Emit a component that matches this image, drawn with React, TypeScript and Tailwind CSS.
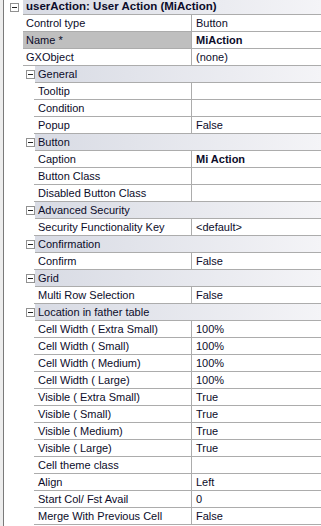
import React from 'react';

type Prop = { name: string; value?: string; bold?: boolean; selected?: boolean };
type Group = { title: string; props: Prop[] };

const topProps: Prop[] = [
  { name: 'Control type', value: 'Button' },
  { name: 'Name *', value: 'MiAction', bold: true, selected: true },
  { name: 'GXObject', value: '(none)' },
];

const groups: Group[] = [
  {
    title: 'General',
    props: [{ name: 'Tooltip' }, { name: 'Condition' }, { name: 'Popup', value: 'False' }],
  },
  {
    title: 'Button',
    props: [
      { name: 'Caption', value: 'Mi Action', bold: true },
      { name: 'Button Class' },
      { name: 'Disabled Button Class' },
    ],
  },
  {
    title: 'Advanced Security',
    props: [{ name: 'Security Functionality Key', value: '<default>' }],
  },
  { title: 'Confirmation', props: [{ name: 'Confirm', value: 'False' }] },
  { title: 'Grid', props: [{ name: 'Multi Row Selection', value: 'False' }] },
  {
    title: 'Location in father table',
    props: [
      { name: 'Cell Width ( Extra Small)', value: '100%' },
      { name: 'Cell Width ( Small)', value: '100%' },
      { name: 'Cell Width ( Medium)', value: '100%' },
      { name: 'Cell Width ( Large)', value: '100%' },
      { name: 'Visible ( Extra Small)', value: 'True' },
      { name: 'Visible ( Small)', value: 'True' },
      { name: 'Visible ( Medium)', value: 'True' },
      { name: 'Visible ( Large)', value: 'True' },
      { name: 'Cell theme class' },
      { name: 'Align', value: 'Left' },
      { name: 'Start Col/ Fst Avail', value: '0' },
      { name: 'Merge With Previous Cell', value: 'False' },
    ],
  },
];

const Minus = () => (
  <div className="w-[9px] h-[9px] border border-[#919191] bg-white flex items-center justify-center">
    <div className="w-[5px] h-px bg-[#222]" />
  </div>
);

const PropRow = ({ p, sub }: { p: Prop; sub?: boolean }) => (
  <div className="flex h-[17px]">
    <div className={`shrink-0 ${sub ? 'w-[30px]' : 'w-[19px]'}`} />
    <div className="flex-1 flex border-b border-[#acacac]">
      <div
        className={`flex-1 flex items-center border-r border-[#acacac] whitespace-nowrap overflow-hidden ${
          sub ? 'pl-[4px]' : 'pl-[3px]'
        } ${p.selected ? 'bg-[#bfbfbf]' : ''}`}
      >
        {p.name}
      </div>
      <div className={`w-[129px] shrink-0 flex items-center pl-[4px] whitespace-nowrap ${p.bold ? 'font-bold' : ''}`}>
        {p.value}
      </div>
    </div>
  </div>
);

export default function App() {
  return (
    <div
      className="w-[321px] h-[526px] overflow-hidden bg-white flex text-[11px] leading-none text-[#0c0c2a]"
      style={{ fontFamily: '"Liberation Sans", Arial, sans-serif' }}
    >
      <div className="w-[3px] shrink-0 bg-[#ededed]" />
      <div className="w-px shrink-0 bg-[#7a7a7a]" />
      <div className="flex-1 flex flex-col">
        <div className="flex h-[15px]">
          <div className="w-[19px] shrink-0 flex justify-center pt-[3px] pl-[2px]">
            <Minus />
          </div>
          <div className="flex-1 flex items-center pl-[3px] font-bold text-[11.5px] border-b border-[#acacac] bg-gradient-to-r from-[#d8dbe4] to-[#f4f4f7] whitespace-nowrap">
            userAction: User Action (MiAction)
          </div>
        </div>
        {topProps.map((p) => (
          <PropRow key={p.name} p={p} />
        ))}
        {groups.map((g) => (
          <React.Fragment key={g.title}>
            <div className="flex h-[17px]">
              <div className="w-[19px] shrink-0" />
              <div className="w-[12px] shrink-0 flex items-center pl-[3px] pb-px">
                <Minus />
              </div>
              <div className="flex-1 flex items-center pl-[3px] border-b border-[#acacac] bg-gradient-to-r from-[#d8dbe4] to-[#f4f4f7]">
                {g.title}
              </div>
            </div>
            {g.props.map((p) => (
              <PropRow key={p.name} p={p} sub />
            ))}
          </React.Fragment>
        ))}
      </div>
    </div>
  );
}
